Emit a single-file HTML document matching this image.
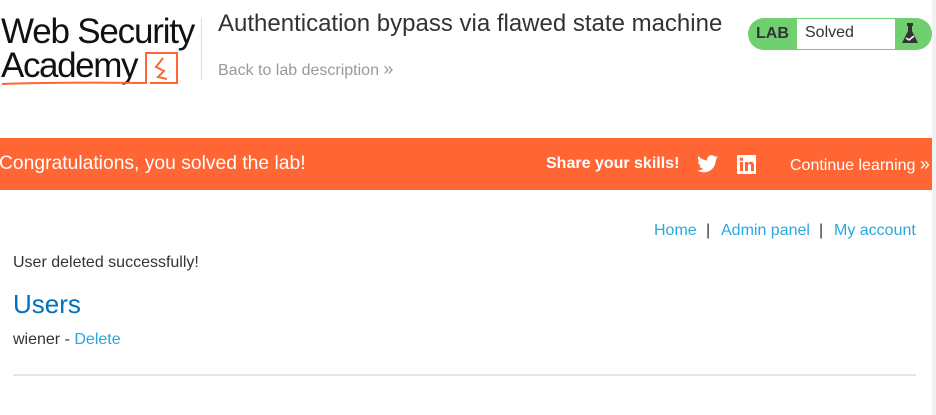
<!DOCTYPE html>
<html><head><style>
body{margin:0;width:936px;height:415px;background:#fff;font-family:"Liberation Sans",sans-serif;position:relative;overflow:hidden}
.a{position:absolute;white-space:nowrap}
.n{position:absolute;top:222px;font-size:16px;color:#29a8e0;white-space:nowrap}
</style></head><body>
<div class="a" style="right:0;top:0;width:4px;height:415px;background:#f1f1f1"></div>
<div class="a" style="left:1px;top:14px;font-size:35px;letter-spacing:-1.2px;color:#111;line-height:36px">Web Security</div>
<div class="a" style="left:1px;top:48px;font-size:35px;letter-spacing:-1.4px;color:#111;line-height:36px">Academy</div>
<svg class="a" style="left:0;top:50px" width="182" height="40"><path d="M2 34 Q60 32 146 33 L146 3 L177 3 L177 33 L150 33" fill="none" stroke="#ff6633" stroke-width="2"/><path d="M163 8 L156 17 L164 21 L158 27 L167 29" fill="none" stroke="#ff6633" stroke-width="2"/></svg>
<div class="a" style="left:201px;top:18px;width:1px;height:62px;background:#ddd"></div>
<div class="a" style="left:218px;top:10px;font-size:24px;color:#333">Authentication bypass via flawed state machine</div>
<div class="a" style="left:218px;top:59px;font-size:16px;color:#999">Back to lab description <span style="font-size:18px">»</span></div>
<div class="a" style="left:748px;top:18px;width:184px;height:32px;border-radius:16px;background:#70d070"></div>
<div class="a" style="left:797px;top:19px;width:98px;height:30px;background:#fff"></div>
<div class="a" style="left:756px;top:25px;font-size:16px;font-weight:bold;color:#333">LAB</div>
<div class="a" style="left:805px;top:24px;font-size:16px;color:#333">Solved</div>
<svg class="a" style="left:900px;top:22px" width="20" height="24"><rect x="7" y="1" width="6" height="3" fill="#333"/><path d="M8 4 L12 4 L12 9 L18 21 L2 21 L8 9Z" fill="#333"/><path d="M6 16 L9 18 L14 14" stroke="#fff" stroke-width="1.5" fill="none"/></svg>
<div class="a" style="left:0;top:138px;width:932px;height:52px;background:#ff6633"></div>
<div class="a" style="left:-1px;top:153px;font-size:19.3px;color:#fff">Congratulations, you solved the lab!</div>
<div class="a" style="left:546px;top:155px;font-size:16px;font-weight:bold;color:#fff">Share your skills!</div>
<svg class="a" style="left:697px;top:155px" width="21" height="18" viewBox="0 0 24 20"><path d="M24 2.4a10 10 0 0 1-2.8.8A5 5 0 0 0 23.3.4a10 10 0 0 1-3.1 1.2A4.9 4.9 0 0 0 11.8 6 14 14 0 0 1 1.7.9a4.9 4.9 0 0 0 1.5 6.6A4.9 4.9 0 0 1 1 6.9a4.9 4.9 0 0 0 3.9 4.8 5 5 0 0 1-2.2.1 4.9 4.9 0 0 0 4.6 3.4A9.9 9.9 0 0 1 0 17.3 14 14 0 0 0 7.5 19.5c9.1 0 14-7.5 14-14v-.6A10 10 0 0 0 24 2.4z" fill="#fff"/></svg>
<svg class="a" style="left:737px;top:155px" width="19" height="19"><rect width="19" height="19" rx="1" fill="#fff"/><rect x="3" y="7" width="3" height="9" fill="#ff6633"/><circle cx="4.5" cy="4.2" r="1.7" fill="#ff6633"/><path d="M8 7h3v1.5c.6-1 1.7-1.8 3-1.8 2.2 0 3 1.4 3 3.8V16h-3v-5c0-1.2-.4-2-1.5-2S11 10 11 11v5H8z" fill="#ff6633"/></svg>
<div class="a" style="left:790px;top:154px;font-size:16px;color:#fff">Continue learning <span style="font-size:18px">»</span></div>
<div class="n" style="left:654px">Home</div>
<div class="n" style="left:706px;color:#333">|</div>
<div class="n" style="left:721px">Admin panel</div>
<div class="n" style="left:819px;color:#333">|</div>
<div class="n" style="left:834px">My account</div>
<div class="a" style="left:13px;top:254px;font-size:16px;color:#333">User deleted successfully!</div>
<div class="a" style="left:13px;top:289px;font-size:26px;color:#0071bc">Users</div>
<div class="a" style="left:13px;top:331px;font-size:16px;color:#333">wiener - <span style="color:#29a8e0">Delete</span></div>
<div class="a" style="left:13px;top:374px;width:903px;height:2px;background:#e6e6e6"></div>
</body></html>
